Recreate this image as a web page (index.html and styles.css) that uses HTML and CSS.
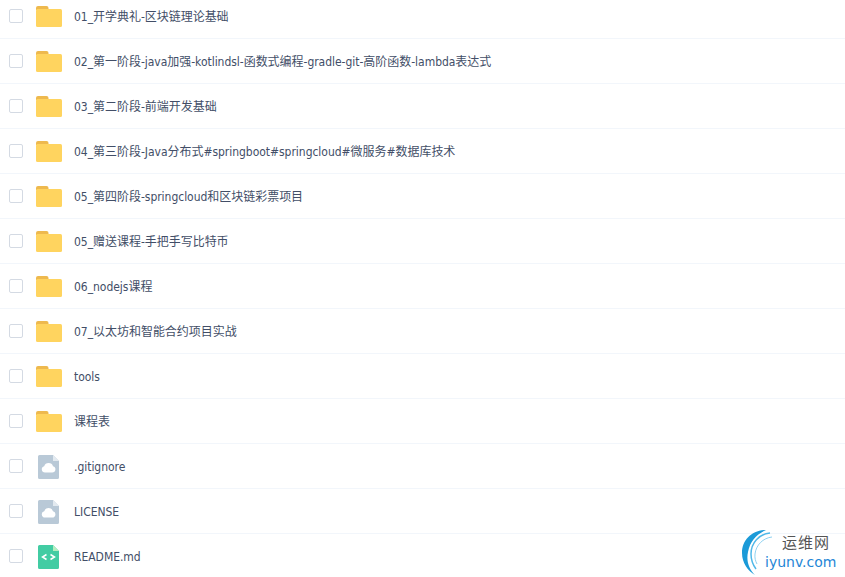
FILE: index.html
```html
<!DOCTYPE html>
<html lang="en">
<head>
    <meta charset="UTF-8">
    <title>Files</title>
    <link rel="stylesheet" href="styles.css">
</head>
<body>
    <svg class="defs" width="0" height="0">
        <symbol id="folder" viewBox="0 0 26 21">
            <path fill="#eeb94e" d="M0 2a2 2 0 0 1 2-2h8.500a2 2 0 0 1 2 2v2H0z"/>
            <rect fill="#ffd45f" y="3" width="26" height="18" rx="1.500"/>
        </symbol>
        <symbol id="doc" viewBox="0 0 21 24">
            <path fill="#b9c9d7" d="M1.500 0H15l6 6v16.500a1.500 1.500 0 0 1-1.500 1.500h-18A1.500 1.500 0 0 1 0 22.500v-21A1.500 1.500 0 0 1 1.500 0z"/>
            <path fill="#e3eaf0" d="M15 0l6 6h-6z"/>
            <path fill="#fff" d="M7 17.500a3.200 3.200 0 0 1-.8-6.300 4.600 4.600 0 0 1 8.800 0 3.200 3.200 0 0 1-.8 6.300z"/>
        </symbol>
        <symbol id="code" viewBox="0 0 21 24">
            <path fill="#42cca3" d="M1.500 0H15l6 6v16.500a1.500 1.500 0 0 1-1.500 1.500h-18A1.500 1.500 0 0 1 0 22.500v-21A1.500 1.500 0 0 1 1.500 0z"/>
            <path fill="#b5edc0" d="M15 0l6 6h-6z"/>
            <path fill="none" stroke="#fff" stroke-width="1.500" d="M8.500 9.500L4.500 12l4 2.500M12.500 9.500l4 2.500-4 2.500"/>
        </symbol>
    </svg>

    <ul class="file-list">
        <li class="file-row"><span class="check"></span><svg class="icon-folder"><use href="#folder"/></svg><span class="name">01_开学典礼-区块链理论基础</span></li>
        <li class="file-row"><span class="check"></span><svg class="icon-folder"><use href="#folder"/></svg><span class="name">02_第一阶段-java加强-kotlindsl-函数式编程-gradle-git-高阶函数-lambda表达式</span></li>
        <li class="file-row"><span class="check"></span><svg class="icon-folder"><use href="#folder"/></svg><span class="name">03_第二阶段-前端开发基础</span></li>
        <li class="file-row"><span class="check"></span><svg class="icon-folder"><use href="#folder"/></svg><span class="name">04_第三阶段-Java分布式#springboot#springcloud#微服务#数据库技术</span></li>
        <li class="file-row"><span class="check"></span><svg class="icon-folder"><use href="#folder"/></svg><span class="name">05_第四阶段-springcloud和区块链彩票项目</span></li>
        <li class="file-row"><span class="check"></span><svg class="icon-folder"><use href="#folder"/></svg><span class="name">05_赠送课程-手把手写比特币</span></li>
        <li class="file-row"><span class="check"></span><svg class="icon-folder"><use href="#folder"/></svg><span class="name">06_nodejs课程</span></li>
        <li class="file-row"><span class="check"></span><svg class="icon-folder"><use href="#folder"/></svg><span class="name">07_以太坊和智能合约项目实战</span></li>
        <li class="file-row"><span class="check"></span><svg class="icon-folder"><use href="#folder"/></svg><span class="name">tools</span></li>
        <li class="file-row"><span class="check"></span><svg class="icon-folder"><use href="#folder"/></svg><span class="name">课程表</span></li>
        <li class="file-row"><span class="check"></span><svg class="icon-doc"><use href="#doc"/></svg><span class="name">.gitignore</span></li>
        <li class="file-row"><span class="check"></span><svg class="icon-doc"><use href="#doc"/></svg><span class="name">LICENSE</span></li>
        <li class="file-row"><span class="check"></span><svg class="icon-doc"><use href="#code"/></svg><span class="name">README.md</span></li>
    </ul>

    <div class="watermark">
        <svg class="wm-arc" viewBox="0 0 42 46">
            <path fill="#1b9ad8" d="M24 0C10 0 0 10 0 23c0 10 6 18 13 22C7 39 4 31 6 22 8 11 15 4 24 0z"/>
            <path fill="none" stroke="#4fb8e8" stroke-width="1.500" d="M28 3C17 4 9 13 9 24c0 6 2 11 5 15"/>
            <path fill="none" stroke="#8fd2f1" stroke-width="1" d="M30 7C21 8 14 15 13 24c-.4 4 .4 7 2 10"/>
        </svg>
        <span class="wm-cn">运维网</span>
        <span class="wm-en">iyunv.com</span>
    </div>
</body>
</html>
```

FILE: styles.css
```css
body {
    margin: 0;
    background: #fff;
    height: 577px;
    overflow: hidden;
    position: relative;
    font-family: "DejaVu Sans", "Noto Sans CJK SC", sans-serif;
    font-stretch: condensed;
}
.defs {
    display: block;
}
.file-list {
    list-style: none;
    margin: -6px 0 0;
    padding: 0;
}
.file-row {
    display: flex;
    align-items: center;
    height: 44px;
    border-bottom: 1px solid #f2f6fb;
}
.check {
    width: 12px;
    height: 12px;
    margin-left: 9px;
    border: 1px solid #d4dae3;
    border-radius: 2px;
}
.icon-folder {
    width: 26px;
    height: 21px;
    margin-left: 13px;
    margin-top: 1px;
}
.icon-doc {
    width: 21px;
    height: 24px;
    margin-left: 15px;
    margin-right: 3px;
    margin-top: 2px;
}
.name {
    margin-left: 12px;
    font-size: 12px;
    line-height: 16px;
    padding-top: 1px;
    letter-spacing: -0.03px;
    color: #424e67;
    white-space: nowrap;
}
.watermark {
    position: absolute;
    left: 742px;
    top: 530px;
    width: 103px;
    height: 47px;
}
.wm-arc {
    position: absolute;
    left: 0;
    top: 0;
    width: 42px;
    height: 46px;
}
.wm-cn {
    position: absolute;
    left: 40px;
    top: 2px;
    font-size: 15px;
    line-height: 20px;
    letter-spacing: 1px;
    color: #555;
    font-family: "Noto Sans CJK SC", sans-serif;
}
.wm-en {
    position: absolute;
    left: 23px;
    top: 23px;
    font-size: 14px;
    line-height: 18px;
    color: #1f86d6;
    font-family: "DejaVu Sans", sans-serif;
    font-stretch: normal;
}
```
